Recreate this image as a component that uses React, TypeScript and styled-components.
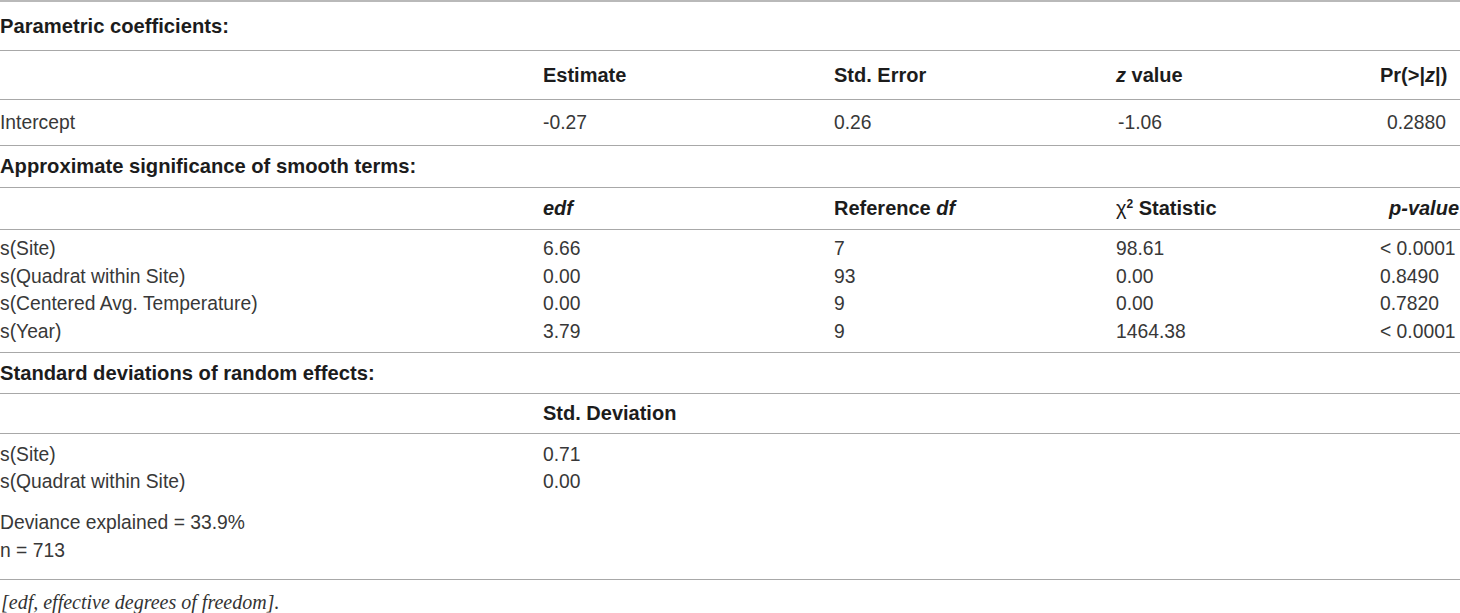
import React from "react";
import styled, { createGlobalStyle } from "styled-components";

const Global = createGlobalStyle`
  *, *::before, *::after { box-sizing: border-box; }
  html, body { margin: 0; padding: 0; background: #ffffff; }
  body {
    font-family: "Liberation Sans", Arial, sans-serif;
    color: #383838;
  }
`;

const Table = styled.div`
  width: 1460px;
  display: flex;
  flex-direction: column;
  border-top: 2px solid #b9b9b9;
`;

const SectionTitle = styled.div<{ $h: number }>`
  height: ${(p) => p.$h}px;
  display: flex;
  align-items: center;
  font-size: 20.2px;
  font-weight: 700;
  color: #1c1c1c;
  border-bottom: 1px solid #a8a8a8;
`;

const Grid = styled.div`
  display: grid;
  grid-template-columns: 543px 291px 282px 264px 80px;
  align-items: center;
`;

const HeadRow = styled(Grid)<{ $h: number }>`
  height: ${(p) => p.$h}px;
  font-size: 20px;
  font-weight: 700;
  color: #1c1c1c;
  border-bottom: 1px solid #a8a8a8;
`;

const Body = styled.div<{ $h: number; $pt: number }>`
  height: ${(p) => p.$h}px;
  padding-top: ${(p) => p.$pt}px;
  display: flex;
  flex-direction: column;
  border-bottom: 1px solid #a8a8a8;
`;

const DataRow = styled(Grid)<{ $h: number }>`
  height: ${(p) => p.$h}px;
  font-size: 19.3px;
  color: #383838;
  white-space: nowrap;
`;

const Cell = styled.div<{ $shift?: number }>`
  padding-left: ${(p) => p.$shift ?? 0}px;
  white-space: nowrap;
`;

const Note = styled.div<{ $h: number }>`
  height: ${(p) => p.$h}px;
  display: flex;
  align-items: center;
  font-size: 19.3px;
  color: #383838;
`;

const Spacer = styled.div<{ $h: number }>`
  height: ${(p) => p.$h}px;
`;

const Chi = styled.span`
  font-weight: 400;
`;

const Sup = styled.sup`
  font-size: 12px;
  line-height: 0;
  vertical-align: 7px;
`;

const Footnote = styled.div`
  padding-top: 10px;
  padding-left: 1px;
  height: 33px;
  font-family: "Liberation Serif", "Times New Roman", serif;
  font-style: italic;
  font-size: 20px;
  line-height: 24px;
  color: #333333;
`;

type Row = string[];

const smooth: Row[] = [
  ["s(Site)", "6.66", "7", "98.61", "< 0.0001"],
  ["s(Quadrat within Site)", "0.00", "93", "0.00", "0.8490"],
  ["s(Centered Avg. Temperature)", "0.00", "9", "0.00", "0.7820"],
  ["s(Year)", "3.79", "9", "1464.38", "< 0.0001"],
];

const random: Row[] = [
  ["s(Site)", "0.71"],
  ["s(Quadrat within Site)", "0.00"],
];

export default function App() {
  return (
    <>
      <Global />
      <Table>
        <SectionTitle $h={49}>Parametric coefficients:</SectionTitle>
        <HeadRow $h={49}>
          <Cell />
          <Cell>Estimate</Cell>
          <Cell>Std. Error</Cell>
          <Cell>
            <i>z</i> value
          </Cell>
          <Cell>
            Pr(&gt;|<i>z</i>|)
          </Cell>
        </HeadRow>
        <Body $h={46} $pt={0}>
          <DataRow $h={45}>
            <Cell>Intercept</Cell>
            <Cell>-0.27</Cell>
            <Cell>0.26</Cell>
            <Cell $shift={2}>-1.06</Cell>
            <Cell $shift={7}>0.2880</Cell>
          </DataRow>
        </Body>

        <SectionTitle $h={42}>Approximate significance of smooth terms:</SectionTitle>
        <HeadRow $h={42}>
          <Cell />
          <Cell>
            <i>edf</i>
          </Cell>
          <Cell>
            Reference <i>df</i>
          </Cell>
          <Cell>
            <Chi>χ</Chi>
            <Sup>2</Sup> Statistic
          </Cell>
          <Cell $shift={9}>
            <i>p-value</i>
          </Cell>
        </HeadRow>
        <Body $h={123} $pt={5}>
          {smooth.map((r) => (
            <DataRow key={r[0]} $h={27.75}>
              {r.map((c, i) => (
                <Cell key={i}>{c}</Cell>
              ))}
            </DataRow>
          ))}
        </Body>

        <SectionTitle $h={41}>Standard deviations of random effects:</SectionTitle>
        <HeadRow $h={40}>
          <Cell />
          <Cell>Std. Deviation</Cell>
        </HeadRow>
        <Body $h={146} $pt={7}>
          {random.map((r) => (
            <DataRow key={r[0]} $h={27.5}>
              {r.map((c, i) => (
                <Cell key={i}>{c}</Cell>
              ))}
            </DataRow>
          ))}
          <Spacer $h={13.5} />
          <Note $h={27.5}>Deviance explained = 33.9%</Note>
          <Note $h={27.5}>n = 713</Note>
        </Body>

        <Footnote>[edf, effective degrees of freedom].</Footnote>
      </Table>
    </>
  );
}
